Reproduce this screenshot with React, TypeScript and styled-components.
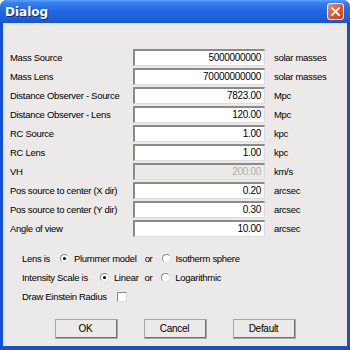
import React from "react";
import styled, { createGlobalStyle } from "styled-components";

const GlobalStyle = createGlobalStyle`
    html, body {
        margin: 0;
        padding: 0;
        width: 350px;
        height: 350px;
        overflow: hidden;
        background: #ffffff;
    }
`;

const Window = styled.div`
    width: 350px;
    height: 350px;
    box-sizing: border-box;
    display: flex;
    flex-direction: column;
    border-radius: 7px 7px 0 0;
    background: #1450d4;
    font-family: "Liberation Sans", Arial, sans-serif;
    font-size: 9.5px;
    letter-spacing: -0.3px;
    color: #000;
    overflow: hidden;
`;

const TitleBar = styled.div`
    height: 23px;
    flex: 0 0 23px;
    display: flex;
    align-items: center;
    justify-content: space-between;
    padding: 0 5px 0 5px;
    background: linear-gradient(180deg, #5aa2ff 0%, #3680f0 12%, #2468e0 45%, #1f5fda 80%, #1a54cc 100%);
`;

const Title = styled.span`
    color: #fff;
    font-weight: bold;
    font-size: 12px;
    font-family: "DejaVu Sans", "Liberation Sans", sans-serif;
    letter-spacing: 0;
    text-shadow: 1px 1px 0 #0b2f8a;
`;

const CloseButton = styled.div`
    width: 15px;
    height: 15px;
    border: 1px solid #fff;
    border-radius: 3px;
    background: linear-gradient(135deg, #f09070 0%, #e05a30 50%, #c8401c 100%);
    display: flex;
    align-items: center;
    justify-content: center;
    margin-right: 1px;
`;

const Body = styled.div`
    flex: 1;
    margin: 0 3px 4px 3px;
    background: #ebeae8;
    padding: 26px 0 0 7px;
    display: flex;
    flex-direction: column;
`;

const FieldGrid = styled.div`
    display: grid;
    grid-template-columns: 123px 132px auto;
    row-gap: 2px;
    align-items: center;
`;

const Label = styled.span`
    white-space: nowrap;
`;

const Unit = styled.span`
    white-space: nowrap;
    margin-left: 9px;
`;

const Field = styled.div<{ $disabled?: boolean }>`
    height: 17px;
    box-sizing: border-box;
    border-top: 2px solid #8a8a8a;
    border-left: 2px solid #8a8a8a;
    border-right: 1px solid #dcdcdc;
    border-bottom: 1px solid #dcdcdc;
    background: ${(p) => (p.$disabled ? "#ebeae8" : "#ffffff")};
    color: ${(p) => (p.$disabled ? "#b0aea8" : "#000")};
    text-align: right;
    padding-right: 3px;
    line-height: 14px;
    font-size: 10px;
`;

const Options = styled.div`
    display: flex;
    flex-direction: column;
    gap: 4px;
    margin: 14px 0 0 12px;
`;

const OptionRow = styled.div`
    display: flex;
    align-items: center;
    height: 15px;
    white-space: nowrap;
`;

const Radio = styled.span<{ $checked?: boolean }>`
    width: 9px;
    height: 9px;
    box-sizing: border-box;
    border-radius: 50%;
    border: 1px solid #8a8a8a;
    border-right-color: #e0e0e0;
    border-bottom-color: #e0e0e0;
    background: #fff;
    display: inline-flex;
    align-items: center;
    justify-content: center;
    margin: 0 5px 0 0;

    &::after {
        content: "";
        width: 3px;
        height: 3px;
        border-radius: 50%;
        background: ${(p) => (p.$checked ? "#000" : "transparent")};
    }
`;

const Gap = styled.span<{ $w: number }>`
    display: inline-block;
    width: ${(p) => p.$w}px;
`;

const CheckBox = styled.span`
    width: 10px;
    height: 10px;
    box-sizing: border-box;
    border: 1px solid #8a8a8a;
    border-right-color: #dcdcdc;
    border-bottom-color: #dcdcdc;
    background: #fff;
    margin-left: 10px;
`;

const ButtonRow = styled.div`
    display: flex;
    justify-content: center;
    gap: 26px;
    margin: 15px 0 0 -7px;
`;

const Button = styled.div`
    width: 63px;
    height: 20px;
    box-sizing: border-box;
    border: 1px solid #fff;
    border-right: 2px solid #707070;
    border-bottom: 2px solid #707070;
    outline: 1px solid #a8a8a8;
    outline-offset: -1px;
    background: #ebeae8;
    display: flex;
    align-items: center;
    justify-content: center;
    font-size: 10px;
`;

const fields = [
    { label: "Mass Source", value: "5000000000", unit: "solar masses" },
    { label: "Mass Lens", value: "70000000000", unit: "solar masses" },
    { label: "Distance Observer - Source", value: "7823.00", unit: "Mpc" },
    { label: "Distance Observer - Lens", value: "120.00", unit: "Mpc" },
    { label: "RC Source", value: "1.00", unit: "kpc" },
    { label: "RC Lens", value: "1.00", unit: "kpc" },
    { label: "VH", value: "200.00", unit: "km/s", disabled: true },
    { label: "Pos source to center (X dir)", value: "0.20", unit: "arcsec" },
    { label: "Pos source to center (Y dir)", value: "0.30", unit: "arcsec" },
    { label: "Angle of view", value: "10.00", unit: "arcsec" },
];

export default function App() {
    return (
        <Window>
            <GlobalStyle />
            <TitleBar>
                <Title>Dialog</Title>
                <CloseButton>
                    <svg width="9" height="9" viewBox="0 0 9 9">
                        <path d="M1 1 L8 8 M8 1 L1 8" stroke="#fff" strokeWidth="1.8" strokeLinecap="square" />
                    </svg>
                </CloseButton>
            </TitleBar>
            <Body>
                <FieldGrid>
                    {fields.map((f) => (
                        <React.Fragment key={f.label}>
                            <Label>{f.label}</Label>
                            <Field $disabled={f.disabled}>{f.value}</Field>
                            <Unit>{f.unit}</Unit>
                        </React.Fragment>
                    ))}
                </FieldGrid>
                <Options>
                    <OptionRow>
                        Lens is<Gap $w={10} />
                        <Radio $checked />Plummer model<Gap $w={8} />or<Gap $w={9} />
                        <Radio />Isotherm sphere
                    </OptionRow>
                    <OptionRow>
                        Intensity Scale is<Gap $w={12} />
                        <Radio $checked />Linear<Gap $w={6} />or<Gap $w={9} />
                        <Radio />Logarithmic
                    </OptionRow>
                    <OptionRow>
                        Draw Einstein Radius
                        <CheckBox />
                    </OptionRow>
                </Options>
                <ButtonRow>
                    <Button>OK</Button>
                    <Button>Cancel</Button>
                    <Button>Default</Button>
                </ButtonRow>
            </Body>
        </Window>
    );
}
